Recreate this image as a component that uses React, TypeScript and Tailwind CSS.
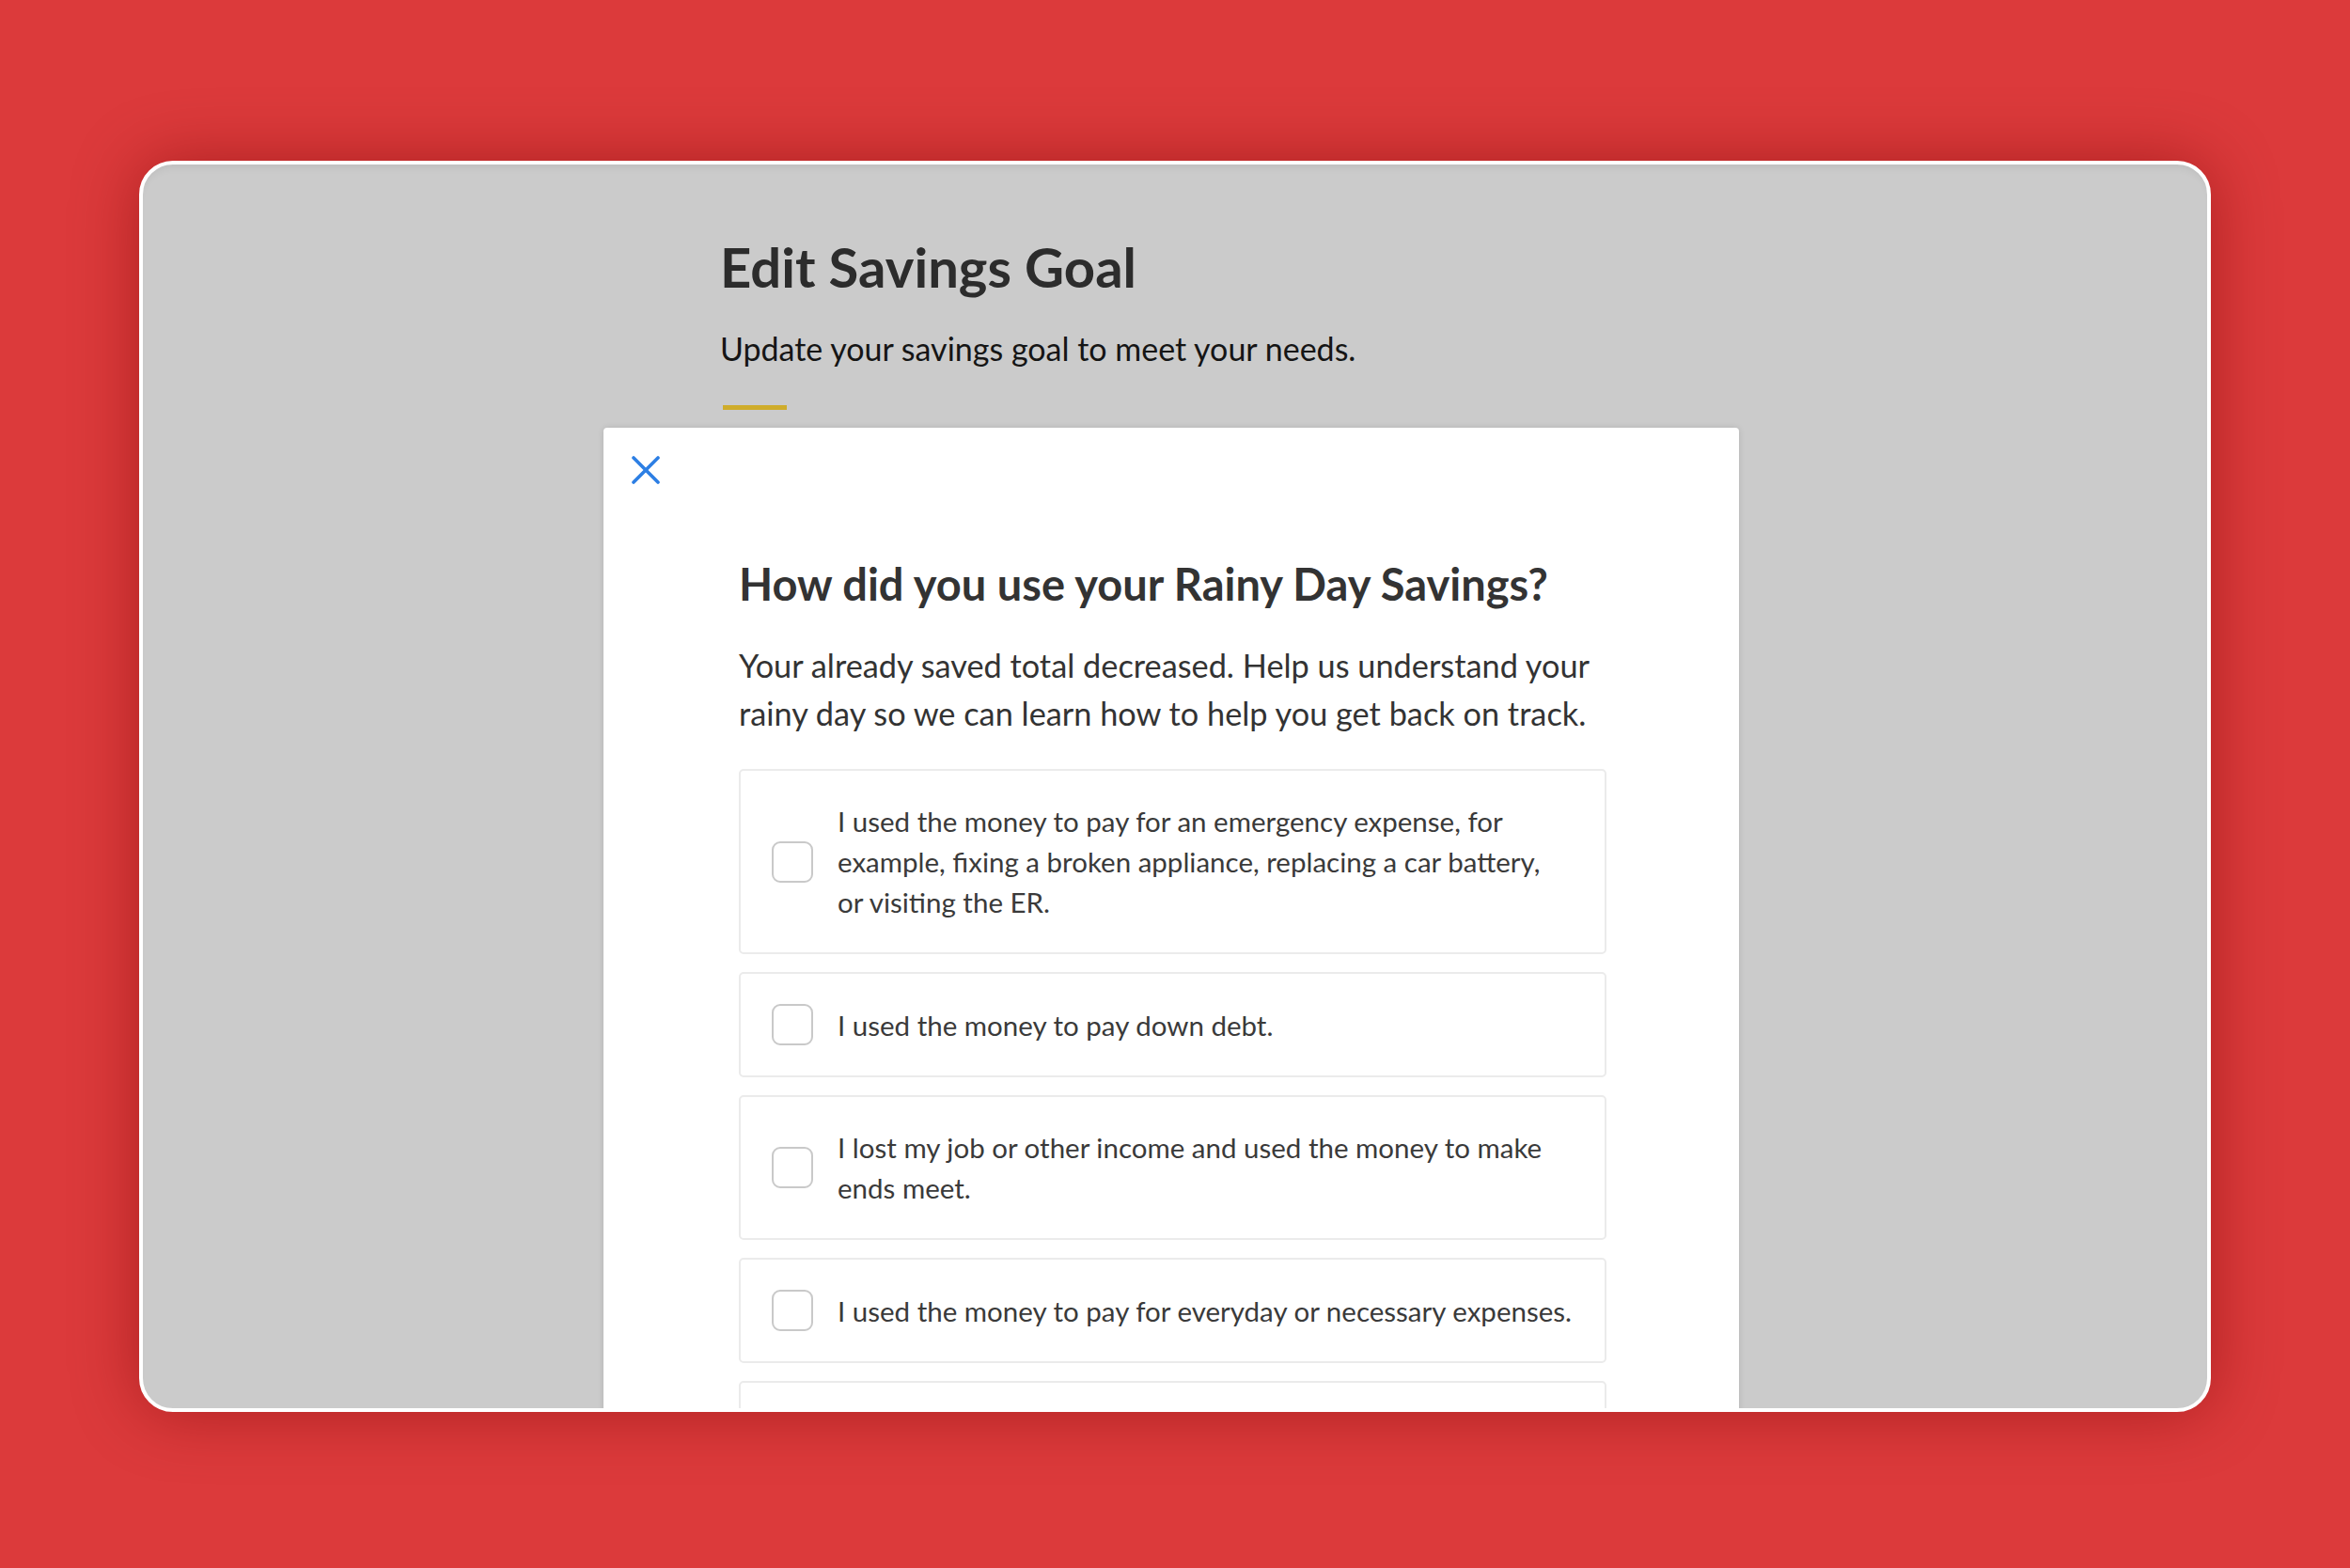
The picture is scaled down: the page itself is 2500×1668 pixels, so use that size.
const reasons = [
  'I used the money to pay for an emergency expense, for example, fixing a broken appliance, replacing a car battery, or\u00a0visiting the ER.',
  'I used the money to pay down debt.',
  'I lost my job or other income and used the money to make ends meet.',
  'I used the money to pay for everyday or necessary expenses.',
  'I used the money for something else.',
];

function CloseIcon() {
  return (
    <svg width="30" height="30" viewBox="0 0 30 30" fill="none">
      <path d="M2 2 L28 28 M28 2 L2 28" stroke="#2d7fe4" strokeWidth="3.6" strokeLinecap="round" />
    </svg>
  );
}

function ReasonOption({ label }: { label: string }) {
  return (
    <label className="flex items-center gap-[26px] rounded-[5px] border-2 border-[#ebebeb] bg-white pl-[33px] pr-[30px] py-[32px]">
      <span className="h-[44px] w-[44px] shrink-0 rounded-[9px] border-2 border-[#c9c9c9] bg-white" />
      <span className="text-[29.5px] leading-[43px] text-[#3a3a3a]">{label}</span>
    </label>
  );
}

export default function App() {
  return (
    <div className="h-[1668px] w-[2500px] overflow-hidden bg-[#dc3a3b] pl-[148px] pt-[171px] font-['Lato',sans-serif]">
      <div className="h-[1331px] w-[2204px] overflow-hidden rounded-[36px] border-4 border-white bg-[#cbcbcb] shadow-[0_0_70px_rgba(110,0,0,0.45),inset_0_8px_10px_-6px_rgba(0,0,0,0.08)]">
        <div className="pl-[614px] pt-[80px]">
          <h1 className="text-[58px] font-bold leading-none text-[#2c2c2c]">Edit Savings Goal</h1>
          <p className="mt-[41px] text-[34px] leading-none text-[#151515]">Update your savings goal to meet your needs.</p>
          <div className="ml-[3px] mt-[43px] h-[5px] w-[68px] bg-[#cfac2b]" />
        </div>

        <div className="ml-[490px] mt-[19px] w-[1208px] rounded-[4px] bg-white pb-[60px] shadow-[0_0_6px_rgba(0,0,0,0.12)]">
          <div className="pl-[30px] pt-[30px]">
            <CloseIcon />
          </div>
          <div className="pl-[144px] pr-[141px] pt-[83px]">
            <h2 className="text-[47px] font-bold leading-none text-[#333]">How did you use your Rainy Day Savings?</h2>
            <p className="mt-[37px] text-[34.3px] leading-[51px] text-[#333]">
              Your already saved total decreased. Help us understand your rainy day so we can learn how to help you get back on track.
            </p>
            <div className="mt-[34px] flex flex-col gap-[19px]">
              {reasons.map((r) => (
                <ReasonOption key={r} label={r} />
              ))}
            </div>
          </div>
        </div>
      </div>
    </div>
  );
}
